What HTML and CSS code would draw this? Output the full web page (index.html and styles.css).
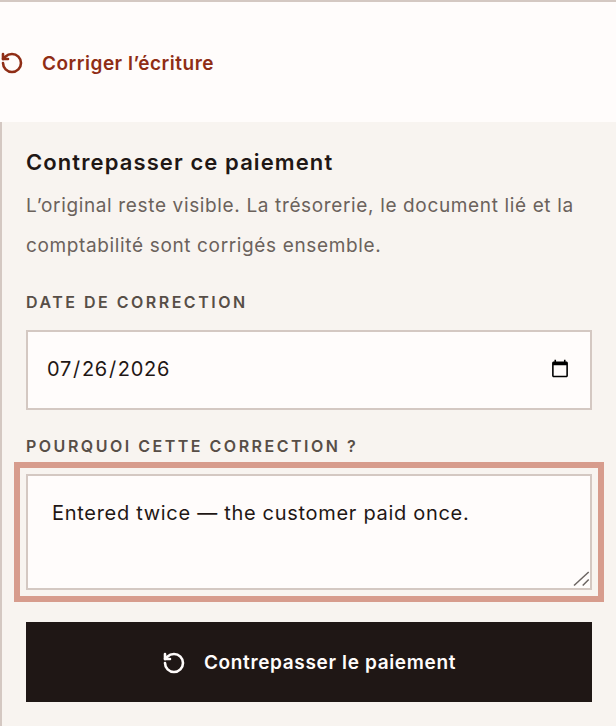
FILE: index.html
```html
<!DOCTYPE html>
<html lang="fr">
  <head>
    <meta charset="UTF-8" />
    <meta name="viewport" content="width=device-width, initial-scale=1.0" />
    <title>Corriger l'écriture</title>
    <link rel="stylesheet" href="styles.css">
  </head>
  <body>
    <div class="trigger">
      <svg class="icon" viewBox="0 0 24 24" fill="none" stroke="currentColor" stroke-width="2.6" stroke-linecap="round" stroke-linejoin="round">
        <path d="M3 12a9 9 0 1 0 9-9 9.75 9.75 0 0 0-6.74 2.74L3 8" />
        <path d="M3 3v5h5" />
      </svg>
      <span>Corriger l’écriture</span>
    </div>

    <div class="panel">
      <h2>Contrepasser ce paiement</h2>
      <p class="hint">
        L’original reste visible. La trésorerie, le document lié et la
        comptabilité sont corrigés ensemble.
      </p>

      <label class="label" for="correctionDate">Date de correction</label>
      <input class="field date-field" type="date" id="correctionDate" value="2026-07-26" />

      <label class="label reason-label" for="reason">Pourquoi cette correction ?</label>
      <div class="reason-wrap">
        <textarea class="field reason-field" id="reason">Entered twice — the customer paid once.</textarea>
        <!-- resize grip -->
        <svg class="grip" viewBox="0 0 18 18" fill="none" stroke="#6b6461" stroke-width="1.5">
          <path d="M2 15.5 16.7 2" />
          <path d="M10.7 15.5 16.7 9.5" />
        </svg>
      </div>

      <button class="submit">
        <svg class="icon" viewBox="0 0 24 24" fill="none" stroke="currentColor" stroke-width="2.6" stroke-linecap="round" stroke-linejoin="round">
          <path d="M3 12a9 9 0 1 0 9-9 9.75 9.75 0 0 0-6.74 2.74L3 8" />
          <path d="M3 3v5h5" />
        </svg>
        <span>Contrepasser le paiement</span>
      </button>
    </div>
  </body>
</html>
```

FILE: styles.css
```css
body {
  margin: 0;
  font-family: Inter, 'Liberation Sans', sans-serif;
  background-color: #f8f4f0;
  color: #1f1715;
  border-top: 2px solid #d4c8c2;
}
.trigger {
  box-sizing: border-box;
  height: 120px;
  padding-top: 2px;
  display: flex;
  align-items: center;
  gap: 18px;
  background-color: #fffcfb;
  color: #8f2d15;
  font-size: 19px;
  font-weight: 600;
  letter-spacing: 0.5px;
}
.icon {
  width: 24px;
  height: 24px;
  flex-shrink: 0;
}
.panel {
  display: flex;
  flex-direction: column;
  align-items: stretch;
  padding: 24px;
  border-left: 2px solid #d4c8c2;
  background-color: #f8f4f0;
}
h2 {
  margin: 0;
  font-size: 22px;
  line-height: 32px;
  font-weight: 600;
  letter-spacing: 1.1px;
}
.hint {
  margin: 8px 0 0;
  font-size: 19px;
  line-height: 40px;
  letter-spacing: 0.64px;
  color: #6b625c;
}
.label {
  margin-top: 24px;
  font-size: 16px;
  line-height: 24px;
  font-weight: 600;
  letter-spacing: 2.5px;
  text-transform: uppercase;
  color: #574e47;
}
.field {
  box-sizing: border-box;
  width: 100%;
  margin: 0;
  border: 2px solid #d4c8c2;
  border-radius: 0;
  background-color: #fffcfb;
  color: #1f1715;
  font-family: inherit;
  font-size: 20px;
  letter-spacing: 0.7px;
}
.date-field {
  height: 80px;
  margin-top: 16px;
  padding: 0 18px 2px;
}
.reason-label {
  margin-top: 24px;
}
.reason-wrap {
  position: relative;
  margin-top: 16px;
}
.reason-field {
  display: block;
  height: 116px;
  padding: 23px 24px;
  line-height: 28px;
  resize: none;
  outline: 6px solid #d79c8d;
  outline-offset: 6px;
}
.grip {
  position: absolute;
  right: 2px;
  bottom: 2px;
  width: 18px;
  height: 18px;
}
.submit {
  box-sizing: border-box;
  height: 80px;
  margin-top: 32px;
  padding-top: 2px;
  display: flex;
  align-items: center;
  justify-content: center;
  gap: 18px;
  border: none;
  background-color: #1f1715;
  color: #fffcfb;
  font-family: inherit;
  font-size: 19px;
  font-weight: 600;
  letter-spacing: 0.65px;
}
```
